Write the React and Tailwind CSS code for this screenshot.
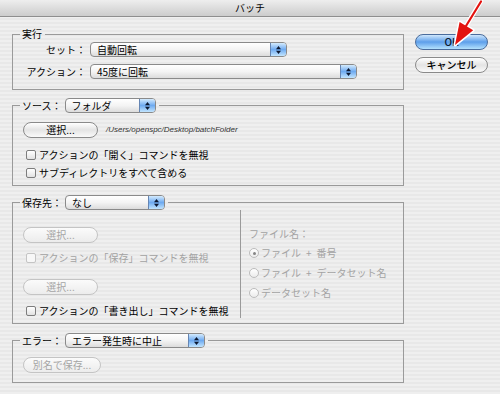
// Photoshop "バッチ" dialog, Aqua look: pinstripe sheet, group boxes with
// inline popups in the legends, default (blue) OK button.

function Arrows() {
  return (
    <svg width="7" height="10" viewBox="0 0 7 10">
      <polygon points="1,4.2 3.5,1 6,4.2" fill="#0c1830" />
      <polygon points="1,5.8 3.5,9 6,5.8" fill="#0c1830" />
    </svg>
  );
}

function Popup({ value, className = "" }) {
  return (
    <div
      className={`flex h-[15px] shrink-0 overflow-hidden rounded-[4px] border border-[#8a8a8a] bg-linear-to-b from-[#ffffff] via-[#f4f4f4] to-[#dcdcdc] ${className}`}
    >
      <span className="flex-1 truncate pl-[6px] text-[10px] leading-[13px] text-black">{value}</span>
      <span className="flex w-[16px] items-center justify-center border-l border-[#6585b3] bg-linear-to-b from-[#d4ebfd] via-[#6eaaf0] to-[#c2e5fe]">
        <Arrows />
      </span>
    </div>
  );
}

function AquaButton({ children, disabled, className = "" }) {
  return (
    <div
      className={`flex h-[16px] shrink-0 items-center justify-center rounded-full border text-[10px] leading-none ${
        disabled
          ? "border-[#c4c4c4] bg-linear-to-b from-[#fbfbfb] to-[#ececec] text-[#a5a5a5]"
          : "border-[#8a8a8a] bg-linear-to-b from-[#ffffff] via-[#e4e4e4] to-[#fafafa] text-black"
      } ${className}`}
    >
      {children}
    </div>
  );
}

function Check({ label, disabled }) {
  return (
    <div className="flex h-[14px] items-center">
      <span
        className={`h-[10px] w-[10px] shrink-0 rounded-[2px] border ${
          disabled ? "border-[#c4c4c4] bg-[#f7f7f7]" : "border-[#7d7d7d] bg-linear-to-b from-white to-[#e2e2e2]"
        }`}
      />
      <span className={`ml-[3px] text-[10px] leading-[14px] ${disabled ? "text-[#a3a3a3]" : "text-black"}`}>
        {label}
      </span>
    </div>
  );
}

function Radio({ label, checked }) {
  return (
    <div className="flex h-[14px] items-center">
      <span className="flex h-[10px] w-[10px] shrink-0 items-center justify-center rounded-full border border-[#bcbcbc] bg-linear-to-b from-white to-[#ebebeb]">
        {checked && <span className="h-[3px] w-[3px] rounded-full bg-[#858585]" />}
      </span>
      <span className="ml-[2px] whitespace-pre text-[10px] leading-[14px] text-[#a3a3a3]">{label}</span>
    </div>
  );
}

function Group({ legend, className = "", children }) {
  return (
    <fieldset className={`border border-[#9a9a9a] ${className}`}>
      <legend className="ml-[7px] pl-[2px] pr-[3px]">
        <div className="flex items-center text-[10px] leading-[14px]">{legend}</div>
      </legend>
      {children}
    </fieldset>
  );
}

function LegendPopup({ label, value, width }) {
  return (
    <>
      <span>{label}</span>
      <Popup value={value} className={`ml-[3px] ${width}`} />
    </>
  );
}

export default function App() {
  return (
    <div className="relative h-[394px] w-[500px] overflow-hidden bg-[#ececec] bg-[image:repeating-linear-gradient(to_bottom,#efefef_0px,#efefef_2px,#e8e8e8_2px,#e8e8e8_4px)] font-['Noto_Sans_CJK_JP',sans-serif] text-black">
      <div className="flex h-[17px] items-center justify-center border-b border-[#8e8e8e] bg-linear-to-b from-[#eeeeee] to-[#cccccc] text-[10px] leading-none">
        バッチ
      </div>

      <div className="flex pl-[12px] pt-[10px]">
        <div className="w-[392px]">
          <Group legend={<span>実行</span>} className="pb-[10px] pt-[1px]">
            <div className="flex h-[15px] items-center">
              <span className="w-[73px] text-right text-[10px]">セット：</span>
              <Popup value="自動回転" className="ml-[4px] w-[197px]" />
            </div>
            <div className="mt-[7px] flex h-[15px] items-center">
              <span className="w-[73px] text-right text-[10px]">アクション：</span>
              <Popup value="45度に回転" className="ml-[4px] w-[267px]" />
            </div>
          </Group>

          <Group
            legend={<LegendPopup label="ソース：" value="フォルダ" width="w-[91px]" />}
            className="mt-[8px] pb-[5px] pt-[9px]"
          >
            <div className="flex items-center pl-[10px]">
              <AquaButton className="w-[75px]">選択...</AquaButton>
              <span className="ml-[8px] font-['Liberation_Sans',sans-serif] text-[8px] italic text-[#333]">
                /Users/openspc/Desktop/batchFolder
              </span>
            </div>
            <div className="mt-[10px] pl-[13px]">
              <Check label="アクションの「開く」コマンドを無視" />
            </div>
            <div className="mt-[4px] pl-[13px]">
              <Check label="サブディレクトリをすべて含める" />
            </div>
          </Group>

          <Group
            legend={<LegendPopup label="保存先：" value="なし" width="w-[100px]" />}
            className="mt-[9px] pb-[5px]"
          >
            <div className="flex">
              <div className="w-[228px] border-r border-[#9a9a9a] pt-[17px]">
                <AquaButton disabled className="ml-[10px] w-[75px]">選択...</AquaButton>
                <div className="mt-[8px] pl-[13px]">
                  <Check disabled label="アクションの「保存」コマンドを無視" />
                </div>
                <AquaButton disabled className="ml-[10px] mt-[14px] w-[75px]">選択...</AquaButton>
                <div className="mt-[9px] pl-[13px]">
                  <Check label="アクションの「書き出し」コマンドを無視" />
                </div>
              </div>
              <div className="flex-1 pl-[8px] pt-[17px]">
                <div className="h-[14px] text-[10px] leading-[14px] text-[#a3a3a3]">ファイル名：</div>
                <div className="mt-[5px]">
                  <Radio checked label={"ファイル\u2002+\u2002番号"} />
                </div>
                <div className="mt-[6px]">
                  <Radio label={"ファイル\u2002+\u2002データセット名"} />
                </div>
                <div className="mt-[6px]">
                  <Radio label="データセット名" />
                </div>
              </div>
            </div>
          </Group>

          <Group
            legend={<LegendPopup label="エラー：" value="エラー発生時に中止" width="w-[140px]" />}
            className="mt-[9px] pb-[9px] pt-[9px]"
          >
            <AquaButton disabled className="ml-[10px] w-[78px]">別名で保存...</AquaButton>
          </Group>
        </div>

        <div className="ml-[11px] w-[73px] pt-[7px]">
          <div className="flex h-[16px] items-center justify-center rounded-full border border-[#4a6c9c] bg-linear-to-b from-[#cfe7fc] via-[#5d9fea] to-[#b4e1fd] text-[10px] font-medium leading-none text-[#0b1a30]">
            OK
          </div>
          <AquaButton className="mt-[7px] w-[73px] font-medium">キャンセル</AquaButton>
        </div>
      </div>

      <svg className="pointer-events-none absolute left-[448px] top-0" width="42" height="50" viewBox="0 0 42 50">
        <line x1="33" y1="1" x2="18" y2="26" stroke="#fff" strokeWidth="4.5" strokeLinecap="round" />
        <polygon points="7,45 25.2,30.3 11.6,22.1" fill="#fff" stroke="#fff" strokeWidth="3" strokeLinejoin="round" />
        <line x1="33" y1="1.5" x2="18" y2="26" stroke="#e3130f" strokeWidth="2.2" strokeLinecap="round" />
        <polygon points="7,45 25.2,30.3 11.6,22.1" fill="#e3130f" />
      </svg>
    </div>
  );
}
